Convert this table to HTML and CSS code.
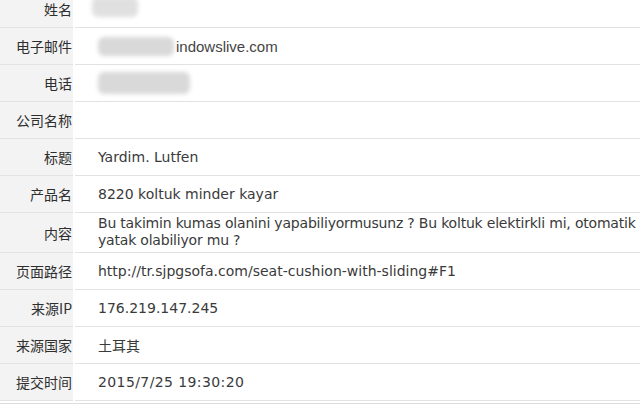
FILE: index.html
```html
<!DOCTYPE html>
<html lang="zh-CN">
<head>
<meta charset="utf-8">
<title>询盘详情</title>
<link rel="stylesheet" href="styles.css">
</head>
<body>
<div class="sheet">
  <div class="row"><div class="label">姓名</div><div class="value"><span class="blur blur-name"></span></div></div>
  <div class="row"><div class="label">电子邮件</div><div class="value"><span class="blur blur-mail"></span><span class="mail">indowslive.com</span></div></div>
  <div class="row"><div class="label">电话</div><div class="value"><span class="blur blur-phone"></span></div></div>
  <div class="row"><div class="label">公司名称</div><div class="value"></div></div>
  <div class="row"><div class="label">标题</div><div class="value">Yardim. Lutfen</div></div>
  <div class="row"><div class="label">产品名</div><div class="value">8220 koltuk minder kayar</div></div>
  <div class="row row-tall"><div class="label">内容</div><div class="value"><span class="para">Bu takimin kumas olanini yapabiliyormusunz ? Bu koltuk elektirkli mi, otomatik<br>yatak olabiliyor mu ?</span></div></div>
  <div class="row"><div class="label">页面路径</div><div class="value">http://tr.sjpgsofa.com/seat-cushion-with-sliding#F1</div></div>
  <div class="row"><div class="label">来源IP</div><div class="value">176.219.147.245</div></div>
  <div class="row"><div class="label">来源国家</div><div class="value cjk">土耳其</div></div>
  <div class="row"><div class="label">提交时间</div><div class="value date">2015/7/25 19:30:20</div></div>
  <div class="tail"></div>
</div>
</body>
</html>
```

FILE: styles.css
```css
html, body {
  margin: 0;
  padding: 0;
  background: #ffffff;
  overflow: hidden;
}

.sheet {
  margin-top: -9px;
}

.row {
  display: flex;
  min-height: 37px;
}

.label {
  width: 73px;
  flex: none;
  box-sizing: border-box;
  padding-right: 1px;
  background: #f3f3f3;
  border-bottom: 1px solid #e2e2e2;
  display: flex;
  align-items: center;
  justify-content: flex-end;
  font-family: "Noto Sans CJK SC", sans-serif;
  font-size: 14px;
  color: #2e2e2e;
  white-space: nowrap;
}

.value {
  flex: 1;
  min-width: 0;
  margin-left: 2px;
  padding-left: 23px;
  border-bottom: 1px solid #e2e2e2;
  display: flex;
  align-items: center;
  font-family: "DejaVu Sans", Verdana, sans-serif;
  font-size: 14px;
  line-height: 17px;
  color: #3a3a3a;
  white-space: nowrap;
  overflow: hidden;
}

.row-tall .value {
  padding-top: 2px;
  padding-bottom: 3px;
}

.para {
  display: block;
  letter-spacing: -0.2px;
}

.date {
  letter-spacing: 0.4px;
}

.cjk {
  font-family: "Noto Sans CJK SC", sans-serif;
}

.mail {
  font-family: "Liberation Sans", Arial, sans-serif;
  font-size: 15px;
  color: #444444;
}

.blur {
  display: inline-block;
  flex: none;
  background: #d9d9d9;
  border-radius: 6px;
  filter: blur(2px);
}

.blur-name {
  width: 46px;
  height: 20px;
  margin-left: -6px;
  margin-top: -4px;
  background: #e0e0e0;
}

.blur-mail {
  width: 76px;
  height: 19px;
  margin-right: 2px;
}

.blur-phone {
  width: 92px;
  height: 22px;
}

.tail {
  height: 2px;
  border-bottom: 1px solid #dddddd;
}
```
